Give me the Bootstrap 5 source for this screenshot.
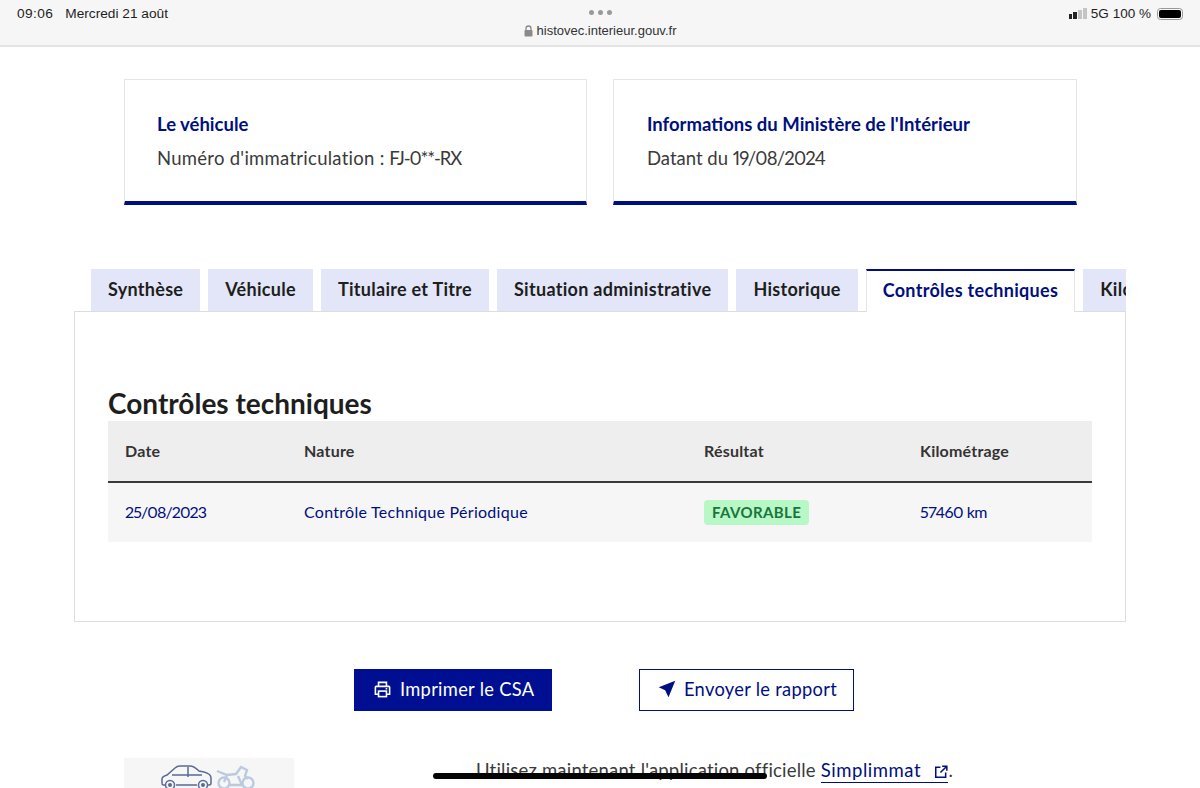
<!DOCTYPE html>
<html lang="fr">
<head>
<meta charset="utf-8">
<title>HistoVec</title>
<link href="https://cdn.jsdelivr.net/npm/bootstrap@5.3.0/dist/css/bootstrap.min.css" rel="stylesheet">
<style>
html,body{height:788px;overflow:hidden}
body{font-family:Lato,"Noto Sans",sans-serif;background:#fff;color:#3a3a3a;position:relative;font-variant-numeric:proportional-nums}
.sysbar{height:47px;background:#f6f6f6;border-bottom:2px solid #e4e4e4;font-family:"Liberation Sans",sans-serif;font-size:13.7px;color:#1e1e1e;padding:4px 17px 0;position:relative}
.sys-heure{letter-spacing:.4px}
.sys-droite{font-size:13.5px}
.sys-url{position:absolute;left:0;right:0;top:7px;display:flex;flex-direction:column;align-items:center;font-size:13px;line-height:16px;color:#333}
.sys-dots{display:flex;gap:4px;height:11px;margin-bottom:5px;align-items:center}
.sys-dots i{width:5px;height:5px;border-radius:50%;background:#9a9a9a}
.sigbars{display:flex;align-items:flex-end;gap:1px;height:11px}
.sigbars i{width:3.75px;background:#222}
.sigbars i.off{background:#c4c4c4}
.batt{width:26px;height:12px;border:1.5px solid #999;border-radius:3.5px;padding:1px;display:block;margin-left:2px}
.batt i{display:block;height:100%;background:#000;border-radius:2px}
.infos{padding:32px 123px 0 124px;gap:26px}
.infobox{flex:1 1 0;height:126px;border:1px solid #e5e5e5;border-bottom:4px solid #000f7f;padding:32px 32px 0 33px;font-size:18.5px;line-height:24px}
.infobox:first-child{flex:0 0 463px;padding-left:32px}
.infobox h2{font-size:18.5px;font-weight:700;color:#000f7f;line-height:24px;margin:0 0 10px}
.infobox p{margin:0}
.libelle{letter-spacing:.27px}
.code{letter-spacing:-1.1px}
.jour{letter-spacing:-.8px}
.tabstrip{margin:64px 74px -1px;padding-left:17px;overflow:hidden;gap:8px;height:43px;flex-wrap:nowrap;white-space:nowrap;position:relative;z-index:1;align-items:flex-start}
.ongl{flex:none;background:#e3e6f8;color:#1e1e1e;font-weight:700;font-size:18px;line-height:41px;padding:0 17px;height:42px;letter-spacing:.29px}
.ongl.on{background:#fff;color:#000f7f;border-top:2px solid #000f7f;border-left:1px solid #e5e5e5;border-right:1px solid #e5e5e5;line-height:38px;padding:0 16px;height:43px}
.panneau{margin:0 74px;height:311px;border:1px solid #ddd;padding:73px 33px 0}
.panneau h3{font-size:28px;font-weight:700;color:#1e1e1e;line-height:36px;margin:0}
.grille{display:grid;grid-template-columns:179px 400px 216px 1fr;padding-left:17px;align-items:center}
.grille.tete{height:62px;background:#eee;border-bottom:2px solid #3a3a3a;font-weight:700;font-size:16px;color:#333;letter-spacing:.2px}
.grille.ligne{height:59px;background:#f6f6f6;font-size:16px;color:#000f7f;letter-spacing:.28px}
.grille.ligne>span{padding-bottom:2px}
.grille.ligne>span.cellule-favo{padding-bottom:0}
.jour-court{letter-spacing:-.9px}
.km{letter-spacing:-.5px}
.favo{display:inline-block;background:#b8f7c6;color:#18753c;font-weight:700;font-size:15px;line-height:25px;padding:0 8px;border-radius:4px;letter-spacing:.4px}
.actions{margin-top:47px;padding-left:354px;gap:87px}
.bouton{height:42px;border-radius:0;font-size:18.3px;line-height:1;display:flex;align-items:center;justify-content:flex-start;gap:8px;letter-spacing:.3px;padding:0 0 2px 18px;white-space:nowrap}
.bouton.plein{background:#000f91;color:#fff;border:1px solid #000f91;width:198px}
.bouton.creux{background:#fff;color:#000f7f;border:1px solid #000f7f;width:215px}
.piedpage{margin-top:47px;padding-left:124px}
.vignette{width:170px;height:40px;background:#f6f6f6;display:flex;justify-content:center;padding-top:6px;flex:none}
.appli{padding-left:182px;font-size:18.5px;line-height:24px;color:#3a3a3a;letter-spacing:.2px}
.appli a{color:#000f7f;text-decoration:none;border-bottom:1.5px solid #000f7f;display:inline-block;letter-spacing:.55px}
.homebar{position:absolute;left:433px;top:773px;width:334px;height:6px;border-radius:3px;background:#050505}
</style>
</head>
<body>
<div class="sysbar d-flex justify-content-between">
  <div class="d-flex gap-2"><span class="sys-heure">09:06</span><span class="ms-1">Mercredi 21 août</span></div>
  <div class="sys-url"><div class="sys-dots"><i></i><i></i><i></i></div>
    <div class="d-flex align-items-center gap-1">
      <svg width="9" height="12" viewBox="0 0 9 12"><path d="M2 5V3.5a2.5 2.5 0 0 1 5 0V5" fill="none" stroke="#8a8a8a" stroke-width="1.3"/><rect x="0.5" y="5" width="8" height="6.5" rx="1" fill="#8a8a8a"/></svg>
      <span>histovec.interieur.gouv.fr</span></div></div>
  <div class="sys-droite d-flex align-items-start gap-1">
    <div class="sigbars mt-1"><i style="height:5px"></i><i style="height:7px"></i><i class="off" style="height:9px"></i><i class="off" style="height:11px"></i></div>
    <span>5G</span><span>100 %</span>
    <span class="batt mt-1"><i></i></span>
  </div>
</div>

<div class="infos d-flex">
  <div class="infobox"><h2>Le véhicule</h2><p><span class="libelle">Numéro d'immatriculation :</span> <span class="code">FJ-0**-RX</span></p></div>
  <div class="infobox"><h2>Informations du Ministère de l'Intérieur</h2><p>Datant du <span class="jour">19/08/2024</span></p></div>
</div>

<div class="tabstrip d-flex">
  <div class="ongl">Synthèse</div>
  <div class="ongl">Véhicule</div>
  <div class="ongl">Titulaire et Titre</div>
  <div class="ongl">Situation administrative</div>
  <div class="ongl">Historique</div>
  <div class="ongl on">Contrôles techniques</div>
  <div class="ongl">Kilométrage</div>
</div>
<div class="panneau">
  <h3>Contrôles techniques</h3>
  <div class="grille tete"><span>Date</span><span>Nature</span><span>Résultat</span><span>Kilométrage</span></div>
  <div class="grille ligne"><span class="jour-court">25/08/2023</span><span>Contrôle Technique Périodique</span><span class="cellule-favo"><span class="favo">FAVORABLE</span></span><span class="km">57460 km</span></div>
</div>

<div class="actions d-flex">
  <button type="button" class="btn bouton plein">
    <svg width="19" height="19" viewBox="0 0 24 24" fill="none" stroke="#fff" stroke-width="2"><path d="M7 8V3h10v5"/><path d="M7 18H3V9a1 1 0 0 1 1-1h16a1 1 0 0 1 1 1v9h-4"/><rect x="7" y="14" width="10" height="7"/><path d="M16 11h2"/></svg>
    <span>Imprimer le CSA</span></button>
  <button type="button" class="btn bouton creux">
    <svg width="18" height="18" viewBox="0 0 24 24" fill="#000f7f"><path d="M23 1 1 9.5l8.5 4L14 23z"/></svg>
    <span>Envoyer le rapport</span></button>
</div>

<div class="piedpage d-flex">
  <div class="vignette">
    <svg width="96" height="26" viewBox="0 0 96 26" fill="none">
      <g stroke="#5a6a96" stroke-width="1.5"><path d="M4 21H2c-1 0-1-1-1-2v-4c0-2 2-3 5-4l8-7c1-1 3-2 5-2h10c3 0 6 2 9 5l5 1c4 1 7 3 7 6v5c0 1-1 2-2 2h-1M36 21H15"/><path d="M11 11h30M27 3v10"/><circle cx="9" cy="21" r="4.5"/><circle cx="42" cy="21" r="4.5"/></g>
      <circle cx="9" cy="21" r="2" fill="#5a6a96"/><circle cx="42" cy="21" r="2" fill="#5a6a96"/>
      <g stroke="#bccadf" stroke-width="2.4"><circle cx="63" cy="19" r="5.5"/><circle cx="87" cy="19" r="5.5"/><path d="M56 7l10 4 9-1 5-7 6 3-2 6 3 3M66 11l-3 7M69 21h12l-4-9"/></g>
    </svg>
  </div>
  <div class="appli">Utilisez maintenant l'application officielle <a href="#">Simplimmat <svg class="ms-2" width="14" height="14" viewBox="0 0 24 24" fill="none" stroke="#000f7f" stroke-width="2.6"><path d="M11 4H3v17h17v-8"/><path d="M14 2h8v8M22 2 11 13"/></svg></a>.</div>
</div>
<div class="homebar"></div>
</body>
</html>
